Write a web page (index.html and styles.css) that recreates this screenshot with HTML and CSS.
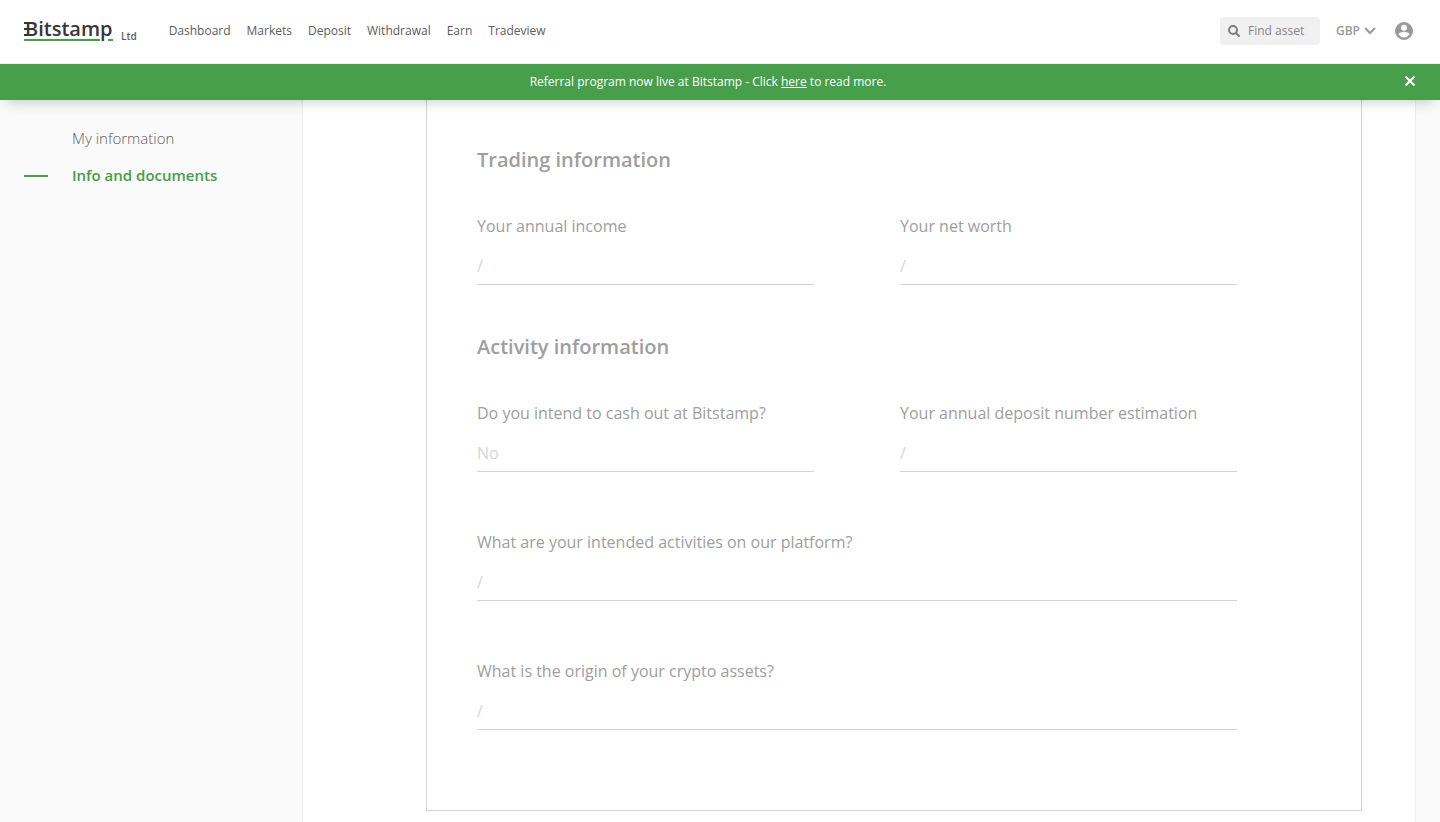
FILE: index.html
```html
<!DOCTYPE html>
<html lang="en">
<head>
<meta charset="utf-8">
<meta name="viewport" content="width=device-width, initial-scale=1">
<title>Info and documents - Bitstamp</title>
<link rel="stylesheet" href="styles.css">
</head>
<body>
<div class="page">
  <header class="top">
    <div class="navbar">
      <a class="brand" href="#" aria-label="Bitstamp Ltd">
        <svg class="brand-logo" width="90" height="30" viewBox="0 0 90 30">
          <text class="brand-name" x="1" y="20">Bitstamp</text>
          <path d="M0 7h4M0 19h4M0 13h3" stroke="#363636" stroke-width="2"/>
          <path d="M0 24h76M84 24h5" stroke="#459e49" stroke-width="2"/>
        </svg>
        <span class="brand-suffix">Ltd</span>
      </a>
      <nav class="menu">
        <a href="#">Dashboard</a>
        <a href="#">Markets</a>
        <a href="#">Deposit</a>
        <a href="#">Withdrawal</a>
        <a href="#">Earn</a>
        <a href="#">Tradeview</a>
      </nav>
      <div class="tools">
        <label class="search">
          <svg width="12" height="12" viewBox="0 0 12 12" fill="none" stroke="#7d7d7d" stroke-width="2"><circle cx="5" cy="5" r="4"/><path d="M8 8l3 3" stroke-linecap="round"/></svg>
          <input type="text" placeholder="Find asset" aria-label="Find asset">
        </label>
        <button class="currency" type="button">GBP
          <svg width="12" height="8" viewBox="0 0 12 8" fill="none" stroke="#999" stroke-width="2"><path d="M1 1l5 5 5-5"/></svg>
        </button>
        <button class="account" type="button" aria-label="Account">
          <svg width="18" height="18" viewBox="0 0 18 18"><path fill="#999" fill-rule="evenodd" d="M9 0a9 9 0 1 0 0 18A9 9 0 0 0 9 0zm0 2.7a3 3 0 1 1 0 6 3 3 0 0 1 0-6zm0 12.8a6.4 6.4 0 0 1-5.4-2.9c0-1.8 3.600-2.800 5.400-2.800s5.400 1 5.400 2.800A6.400 6.400 0 0 1 9 15.500z"/></svg>
        </button>
      </div>
    </div>
    <div class="banner">
      <p class="banner-text">Referral program now live at Bitstamp - Click <a href="#">here</a> to read more.</p>
      <button class="close" type="button" aria-label="Close">
        <svg width="12" height="12" viewBox="0 0 12 12" stroke="#fff" stroke-width="2"><path d="M1.500 1.500l9 9M10.500 1.500l-9 9"/></svg>
      </button>
    </div>
  </header>
  <div class="body">
    <aside class="sidebar">
      <a class="side-link" href="#">My information</a>
      <a class="side-link side-link-active" href="#">Info and documents</a>
    </aside>
    <main class="content">
      <form class="card">
        <h2>Trading information</h2>
        <div class="fields">
          <label class="field">Your annual income<input type="text" value="/" disabled></label>
          <label class="field">Your net worth<input type="text" value="/" disabled></label>
        </div>
        <h2>Activity information</h2>
        <div class="fields">
          <label class="field">Do you intend to cash out at Bitstamp?<input type="text" value="No" disabled></label>
          <label class="field">Your annual deposit number estimation<input type="text" value="/" disabled></label>
          <label class="field field-wide">What are your intended activities on our platform?<input type="text" value="/" disabled></label>
          <label class="field field-wide">What is the origin of your crypto assets?<input type="text" value="/" disabled></label>
        </div>
      </form>
    </main>
  </div>
</div>
</body>
</html>
```

FILE: styles.css
```css
* {
  box-sizing: border-box;
}

body {
  margin: 0;
  font-family: "Open Sans", "Noto Sans", sans-serif;
  color: #5c5c5c;
  background: #fafafa;
}

a {
  color: inherit;
  text-decoration: none;
}

button {
  padding: 0;
  border: 0;
  background: none;
  font: inherit;
  color: inherit;
  cursor: pointer;
}

svg {
  display: block;
}

.page {
  min-height: 100vh;
  display: flex;
  flex-direction: column;
}

.top {
  position: sticky;
  top: 0;
  z-index: 1;
  box-shadow: 0 8px 12px -6px rgba(0, 0, 0, 0.2);
}

.navbar {
  display: flex;
  align-items: center;
  height: 64px;
  padding: 0 27px 2px 24px;
  border-bottom: 1px solid #eee;
  background: #fff;
  font-size: 12px;
}

.brand {
  display: flex;
  align-items: flex-end;
  gap: 7px;
}

.brand-logo {
  overflow: visible;
}

.brand-name {
  font-family: "Open Sans", sans-serif;
  font-size: 20px;
  font-weight: 600;
  fill: #363636;
}

.brand-suffix {
  margin-bottom: 4px;
  font-size: 10px;
  font-weight: 600;
  line-height: 12px;
}

.menu {
  display: flex;
  gap: 16px;
  margin-left: 32px;
}

.tools {
  display: flex;
  align-items: center;
  gap: 16px;
  margin-left: auto;
}

.search {
  display: flex;
  align-items: center;
  gap: 8px;
  width: 100px;
  height: 28px;
  padding: 0 8px;
  border-radius: 4px;
  background: #f0f0f0;
}

.search svg {
  flex: none;
}

.search input {
  flex: 1;
  min-width: 0;
  padding: 0;
  border: 0;
  background: none;
  font: inherit;
}

.search input::placeholder {
  color: #868686;
}

.currency {
  display: flex;
  align-items: center;
  gap: 4px;
  color: #999;
  font-weight: 600;
}

.account {
  margin-left: 3px;
}

.banner {
  display: flex;
  align-items: center;
  height: 36px;
  padding: 0 24px 2px 12px;
  background: #479f4b;
  color: #fff;
  font-size: 12px;
}

.banner-text {
  flex: 1;
  margin: 0;
  text-align: center;
}

.banner a {
  text-decoration: underline;
}

.body {
  flex: 1;
  display: flex;
  padding-right: 24px;
}

.sidebar {
  flex: none;
  width: 302px;
  padding-top: 27px;
}

.side-link {
  display: flex;
  align-items: center;
  margin-bottom: 14px;
  padding-left: 72px;
  font-size: 15px;
  line-height: 23px;
  font-weight: 300;
}

.side-link-active {
  padding-left: 24px;
  color: #459e49;
  font-weight: 600;
}

.side-link-active::before {
  content: "";
  width: 24px;
  height: 2px;
  margin-right: 24px;
  background: #459e49;
}

.content {
  flex: 1;
  padding: 0 53px 11px 123px;
  border: solid #eee;
  border-width: 0 1px;
  background: #fff;
}

.card {
  padding: 46px 124px 80px 50px;
  border: 1px solid #d3d3d3;
  border-top: 0;
}

h2 {
  margin: 0 0 40px;
  color: #9e9e9e;
  font-size: 20px;
  line-height: 28px;
  font-weight: 600;
}

.fields {
  display: grid;
  grid-template-columns: 1fr 1fr;
  gap: 58px 86px;
}

.fields + h2 {
  margin-top: 48px;
}

.field {
  color: #9e9e9e;
  font-size: 16px;
  line-height: 24px;
}

.field-wide {
  grid-column: 1 / -1;
}

.field input {
  display: block;
  width: 100%;
  height: 47px;
  padding: 16px 0 7px;
  border: 0;
  border-bottom: 1px solid #d3d3d3;
  border-radius: 0;
  background: none;
  color: #d6d6d6;
  font: inherit;
}
```
